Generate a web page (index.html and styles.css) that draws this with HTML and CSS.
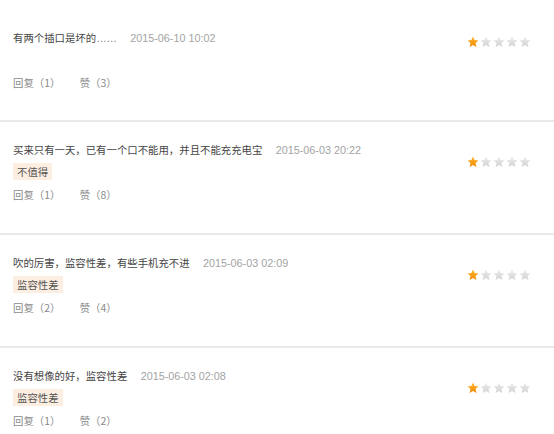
FILE: index.html
```html
<!DOCTYPE html>
<html lang="zh-CN">
<head>
    <meta charset="UTF-8">
    <meta name="viewport" content="width=device-width, initial-scale=1.0">
    <title>评价列表</title>
    <link rel="stylesheet" href="styles.css">
</head>
<body>
    <svg width="0" height="0" class="defs">
      <defs>
        <linearGradient id="on" x1="0" y1="0" x2="0" y2="1">
          <stop offset="0" stop-color="#ffb833"/>
          <stop offset="1" stop-color="#f08a00"/>
        </linearGradient>
        <linearGradient id="off" x1="0" y1="0" x2="0" y2="1">
          <stop offset="0" stop-color="#ececec"/>
          <stop offset="1" stop-color="#d2d2d2"/>
        </linearGradient>
        <symbol id="star" viewBox="0 0 12 12">
          <path d="M6 0.6 L7.6 4.1 L11.4 4.5 L8.5 7 L9.4 10.9 L6 8.9 L2.6 10.9 L3.5 7 L0.6 4.5 L4.4 4.1 Z"/>
        </symbol>
      </defs>
    </svg>

    <section class="comments">

      <div class="item first">
        <div class="main">
          <div class="line">
            <span class="text">有两个插口是坏的<span class="dots">……</span></span>
            <span class="time">2015-06-10 10:02</span>
          </div>
          <div class="tags"></div>
          <div class="actions">
            <span class="reply">回复（1）</span>
            <span class="like">赞（3）</span>
          </div>
        </div>
        <div class="stars">
          <svg class="on"><use href="#star"/></svg><svg><use href="#star"/></svg><svg><use href="#star"/></svg><svg><use href="#star"/></svg><svg><use href="#star"/></svg>
        </div>
      </div>

      <div class="item">
        <div class="main">
          <div class="line">
            <span class="text">买来只有一天，已有一个口不能用，并且不能充充电宝</span>
            <span class="time">2015-06-03 20:22</span>
          </div>
          <div class="tags"><span class="tag">不值得</span></div>
          <div class="actions">
            <span class="reply">回复（1）</span>
            <span class="like">赞（8）</span>
          </div>
        </div>
        <div class="stars">
          <svg class="on"><use href="#star"/></svg><svg><use href="#star"/></svg><svg><use href="#star"/></svg><svg><use href="#star"/></svg><svg><use href="#star"/></svg>
        </div>
      </div>

      <div class="item">
        <div class="main">
          <div class="line">
            <span class="text">吹的厉害，监容性差，有些手机充不进</span>
            <span class="time">2015-06-03 02:09</span>
          </div>
          <div class="tags"><span class="tag">监容性差</span></div>
          <div class="actions">
            <span class="reply">回复（2）</span>
            <span class="like">赞（4）</span>
          </div>
        </div>
        <div class="stars">
          <svg class="on"><use href="#star"/></svg><svg><use href="#star"/></svg><svg><use href="#star"/></svg><svg><use href="#star"/></svg><svg><use href="#star"/></svg>
        </div>
      </div>

      <div class="item">
        <div class="main">
          <div class="line">
            <span class="text">没有想像的好，监容性差</span>
            <span class="time">2015-06-03 02:08</span>
          </div>
          <div class="tags"><span class="tag">监容性差</span></div>
          <div class="actions">
            <span class="reply">回复（1）</span>
            <span class="like">赞（2）</span>
          </div>
        </div>
        <div class="stars">
          <svg class="on"><use href="#star"/></svg><svg><use href="#star"/></svg><svg><use href="#star"/></svg><svg><use href="#star"/></svg><svg><use href="#star"/></svg>
        </div>
      </div>

    </section>
</body>
</html>
```

FILE: styles.css
```css
body {
  margin: 0;
  background: #fff;
  font-family: "Noto Sans CJK SC", "Liberation Sans", sans-serif;
  font-size: 10.4px;
  color: #444;
}
.defs {
  position: absolute;
}
.item {
  display: flex;
  justify-content: space-between;
  align-items: flex-start;
  padding: 18px 23px 29px 13px;
  border-bottom: 2px solid #e9e9e9;
}
.item.first {
  padding-top: 28px;
  padding-bottom: 28px;
}
.line {
  height: 20px;
  line-height: 20px;
  white-space: nowrap;
}
.dots {
  font-family: "Liberation Sans", sans-serif;
  color: #777;
}
.time {
  margin-left: 11px;
  color: #a3a3a3;
  font-family: "Liberation Sans", sans-serif;
  font-size: 10.8px;
}
.tags {
  height: 17px;
  margin-top: 3px;
}
.tag {
  display: inline-block;
  height: 17px;
  line-height: 17px;
  padding: 0 4px;
  background-color: #fcefe2;
  color: #555;
}
.actions {
  margin-top: 6px;
  height: 18px;
  line-height: 18px;
  color: #8a8a8a;
}
.like {
  margin-left: 17px;
}
.stars {
  display: flex;
  gap: 1px;
  margin-top: 16px;
}
.first .stars {
  margin-top: 8px;
}
.stars svg {
  width: 12px;
  height: 12px;
  fill: url(#off);
}
.stars svg.on {
  fill: url(#on);
}
```
